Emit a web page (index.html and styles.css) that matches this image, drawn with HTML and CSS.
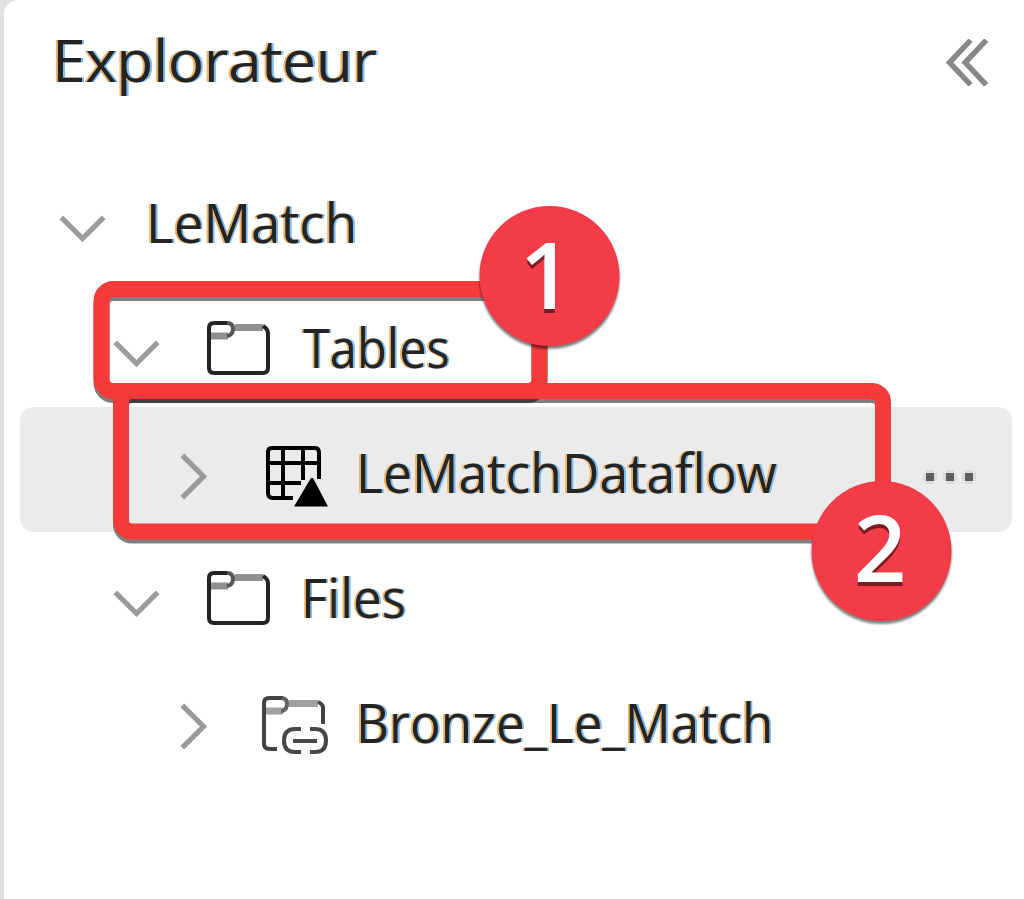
FILE: index.html
```html
<!DOCTYPE html>
<html lang="fr">
<head>
<meta charset="utf-8">
<title>Explorateur</title>
<link rel="stylesheet" href="styles.css">
</head>
<body>
<svg class="defs" width="0" height="0" aria-hidden="true">
  <symbol id="chevron-down" viewBox="0 0 12 7">
    <path fill="none" stroke="#9c9c9c" stroke-width="1.350" d="M.5 .6L6 6.100L11.500 .6"/>
  </symbol>
  <symbol id="chevron-right" viewBox="0 0 7 12">
    <path fill="none" stroke="#9a9a9a" stroke-width="1.350" d="M.6 .5L6.100 6L.6 11.500"/>
  </symbol>
  <symbol id="folder" viewBox="0 0 64 54">
    <path fill="none" stroke="#909090" stroke-width="7" d="M28 6.500h28M4 15h17"/>
    <path fill="none" stroke="#242424" stroke-width="4" d="M20 2H7Q2 2 2 7V47Q2 52 7 52H56Q61 52 61 47V12Q61 8 56 5"/>
    <path fill="none" stroke="#555" stroke-width="4" d="M20 2Q26 2 26 8T20 15"/>
  </symbol>
</svg>
<main class="panel">
  <header class="head">
    <h1 class="title">Explorateur</h1>
    <svg class="collapse" viewBox="0 0 11 12">
      <path fill="none" stroke="#888" stroke-width="1.400" d="M6.300 .3L.9 6L6.300 11.700M10.300 .3L4.900 6L10.300 11.700"/>
    </svg>
  </header>
  <div class="tree">
    <div class="row root">
      <svg class="down"><use href="#chevron-down"/></svg>
      <span class="label l-root">LeMatch</span>
    </div>
    <div class="row group">
      <svg class="down"><use href="#chevron-down"/></svg>
      <svg class="folder"><use href="#folder"/></svg>
      <span class="label l-tables">Tables</span>
    </div>
    <div class="row leaf selected">
      <svg class="right"><use href="#chevron-right"/></svg>
      <svg class="item-icon" viewBox="0 0 66 64">
        <path fill="none" stroke="#000" stroke-width="4" d="M31 53H11Q6 53 6 48V7Q6 3 10 3H53Q57 3 57 8V34M21 3V53M41 3V35M6 18H57M6 38H39"/>
        <path d="M49 33h2L66 61.500H32z"/>
      </svg>
      <span class="label l-flow">LeMatchDataflow</span>
      <span class="more"><i class="dot"></i><i class="dot"></i><i class="dot"></i></span>
    </div>
    <div class="row group">
      <svg class="down"><use href="#chevron-down"/></svg>
      <svg class="folder"><use href="#folder"/></svg>
      <span class="label l-files">Files</span>
    </div>
    <div class="row leaf">
      <svg class="right"><use href="#chevron-right"/></svg>
      <svg class="item-icon link" viewBox="0 0 66 64">
        <g fill="none" stroke-width="4">
          <path stroke="#a0a0a0" stroke-width="7" d="M27 10.500H56M4 18h17"/>
          <path stroke="#424242" d="M21 5H7Q2 5 2 10V51Q2 56 8 56H15M56 9Q61 11 61 15V31"/>
          <path stroke="#606060" d="M20 5Q26 6 25 12T19 18"/>
          <path stroke="#484848" d="M39 36H33Q22 36 22 47.500T33 59H39M48 36H53Q64 36 64 47.500T53 59H48M31 48H55"/>
        </g>
      </svg>
      <span class="label l-bronze">Bronze_Le_Match</span>
    </div>
  </div>
</main>
<svg class="callouts" viewBox="0 0 1024 899">
  <g class="frame"><rect x="101.500" y="289" width="438" height="102" rx="12"/></g>
  <g class="frame"><rect x="121" y="391" width="762" height="140.500" rx="11"/></g>
  <g class="badge"><circle cx="549.500" cy="276" r="70"/><text x="546" y="309">1</text></g>
  <g class="badge"><circle cx="881.500" cy="551" r="70"/><text x="880" y="582">2</text></g>
</svg>
</body>
</html>
```
FILE: styles.css
```css
* { box-sizing: border-box; }
body {
  margin: 0;
  width: 1024px;
  height: 899px;
  overflow: hidden;
  position: relative;
  padding-left: 4px;
  background: #e0e0e0;
  font-family: "Open Sans", "Noto Sans", sans-serif;
  color: #242424;
}
.defs { position: absolute; }
.panel {
  height: 899px;
  background: #fff;
  border-top-left-radius: 14px;
}
svg { flex: none; display: block; }
.head {
  height: 157px;
  padding: 0 35px 0 48px;
  display: flex;
  justify-content: space-between;
  align-items: flex-start;
}
.title {
  margin: 20px 0 0;
  font-size: 58px;
  line-height: 80px;
  font-weight: 500;
  letter-spacing: -0.5px;
  transform: scaleX(1.045);
  transform-origin: left;
  text-shadow: -2px 0 #f0b468, 2px 0 #7cbcf4;
}
.collapse {
  width: 43px;
  height: 47px;
  margin-top: 39px;
}
.tree { padding: 0 12px 0 16px; }
.row {
  height: 125px;
  display: flex;
  align-items: center;
  border-radius: 14px;
}
.root { padding-left: 39px; }
.group { padding-left: 93px; }
.leaf { padding-left: 160px; }
.selected { background: #ebebeb; }
.down {
  width: 47px;
  height: 27px;
  margin-top: 18px;
}
.right {
  width: 27px;
  height: 47px;
  margin-top: 14px;
}
.folder {
  width: 64px;
  height: 54px;
  margin: 7px 0 0 47px;
}
.item-icon {
  width: 66px;
  height: 64px;
  margin: 14px 0 0 55px;
}
.link { margin-top: 11px; }
.label {
  margin-top: 5px;
  font-size: 54.5px;
  line-height: 80px;
  white-space: nowrap;
  transform-origin: left;
  text-shadow: -2px 0 #f0b468, 2px 0 #7cbcf4;
}
.l-root { margin-left: 40px; font-weight: 500; transform: scaleX(0.972); }
.l-tables { margin-left: 32px; transform: scaleX(0.895); }
.l-files { margin-left: 30px; transform: scaleX(0.935); }
.l-flow { margin-left: 28px; transform: scaleX(0.948); }
.l-bronze { margin-left: 28px; transform: scaleX(0.938); }
.more {
  display: flex;
  gap: 11.5px;
  margin: 15px 39px 0 auto;
}
.dot {
  width: 8px;
  height: 8px;
  background: #5e5e5e;
  box-shadow: 3px 0 #dcdcdc, -3px 0 #dcdcdc, 0 3px #dcdcdc, 0 -3px #dcdcdc;
}
.callouts {
  position: absolute;
  inset: 0;
  width: 1024px;
  height: 899px;
}
.frame {
  fill: none;
  stroke: #f43b3a;
  stroke-width: 16px;
  filter: drop-shadow(0 4px 0 rgba(0, 0, 0, 0.5));
}
.badge { filter: drop-shadow(0 3px 1px rgba(0, 0, 0, 0.5)); }
.badge circle { fill: #f43b48; }
.badge text {
  fill: #fff;
  font-size: 92px;
  font-weight: 600;
  text-anchor: middle;
  text-shadow: 0 4px 0 #7c1a22;
}
```
